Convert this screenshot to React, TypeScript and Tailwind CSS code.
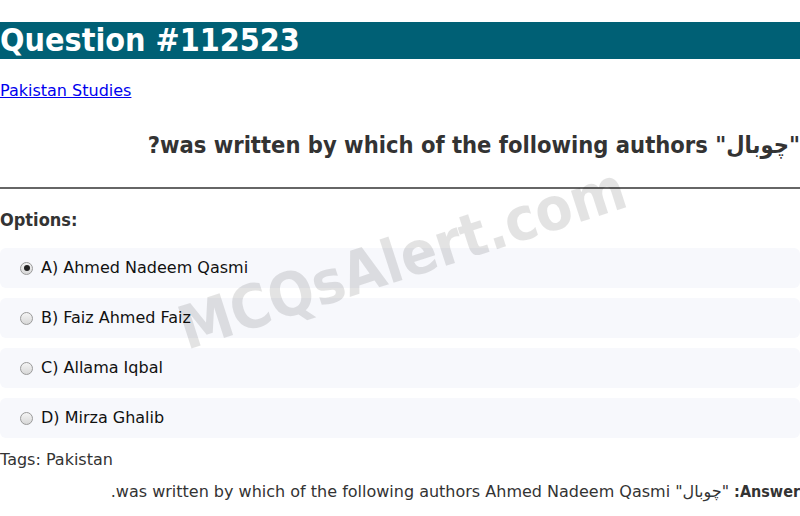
import React from "react";

const options = [
  { label: "A) Ahmed Nadeem Qasmi", checked: true },
  { label: "B) Faiz Ahmed Faiz", checked: false },
  { label: "C) Allama Iqbal", checked: false },
  { label: "D) Mirza Ghalib", checked: false },
];

function Radio({ checked }: { checked: boolean }) {
  return (
    <span className="flex h-[13px] w-[13px] shrink-0 items-center justify-center rounded-full border border-[#9a9a9a] bg-gradient-to-b from-[#f4f4f4] to-[#d8d8d8]">
      {checked && <span className="h-[6px] w-[6px] rounded-full bg-[#222]" />}
    </span>
  );
}

export default function App() {
  return (
    <div className="relative min-h-[516px] overflow-hidden bg-white font-['DejaVu_Sans',sans-serif]">
      <h1 className="mt-[22px] bg-[#006075] font-['DejaVu_Sans_Condensed','DejaVu_Sans',sans-serif] text-[32px] font-bold leading-[37px] text-white">
        Question #112523
      </h1>

      <a href="#" className="mt-[22px] block text-[16px] leading-[19px] text-[#0000ee] underline">
        Pakistan Studies
      </a>

      <h2
        dir="rtl"
        className="mt-[31px] font-['DejaVu_Sans_Condensed','DejaVu_Sans',sans-serif] text-[23.5px] font-bold leading-[28px] text-[#333]"
      >
        "چوبال" was written by which of the following authors?
      </h2>

      <hr className="mt-[28px] border-t-2 border-[#666]" />

      <h3 className="mt-[20px] font-['DejaVu_Sans_Condensed','DejaVu_Sans',sans-serif] text-[18px] font-bold leading-[21px] text-[#333]">
        Options:
      </h3>

      <div className="mt-[18px] flex flex-col gap-[10px]">
        {options.map((o) => (
          <div
            key={o.label}
            className="flex h-[40px] items-center gap-[8px] rounded-[6px] bg-[#f7f8fc] pl-[20px] text-[16px] text-[#111]"
          >
            <Radio checked={o.checked} />
            <span>{o.label}</span>
          </div>
        ))}
      </div>

      <p className="mt-[12px] text-[16px] leading-[19px] text-[#333]">
        Tags: Pakistan
      </p>

      <p dir="rtl" className="mt-[13px] text-[16px] leading-[19px] text-[#333]">
        <b className="font-['DejaVu_Sans_Condensed','DejaVu_Sans',sans-serif]">Answer:</b> "چوبال" was written by which of the following authors Ahmed Nadeem Qasmi.
      </p>

      <div className="pointer-events-none absolute left-[402px] top-[258px] -translate-x-1/2 -translate-y-1/2 -rotate-[18deg] whitespace-nowrap font-['DejaVu_Sans_Condensed','DejaVu_Sans',sans-serif] text-[60px] font-bold text-black/[0.11]">
        MCQsAlert.com
      </div>
    </div>
  );
}
